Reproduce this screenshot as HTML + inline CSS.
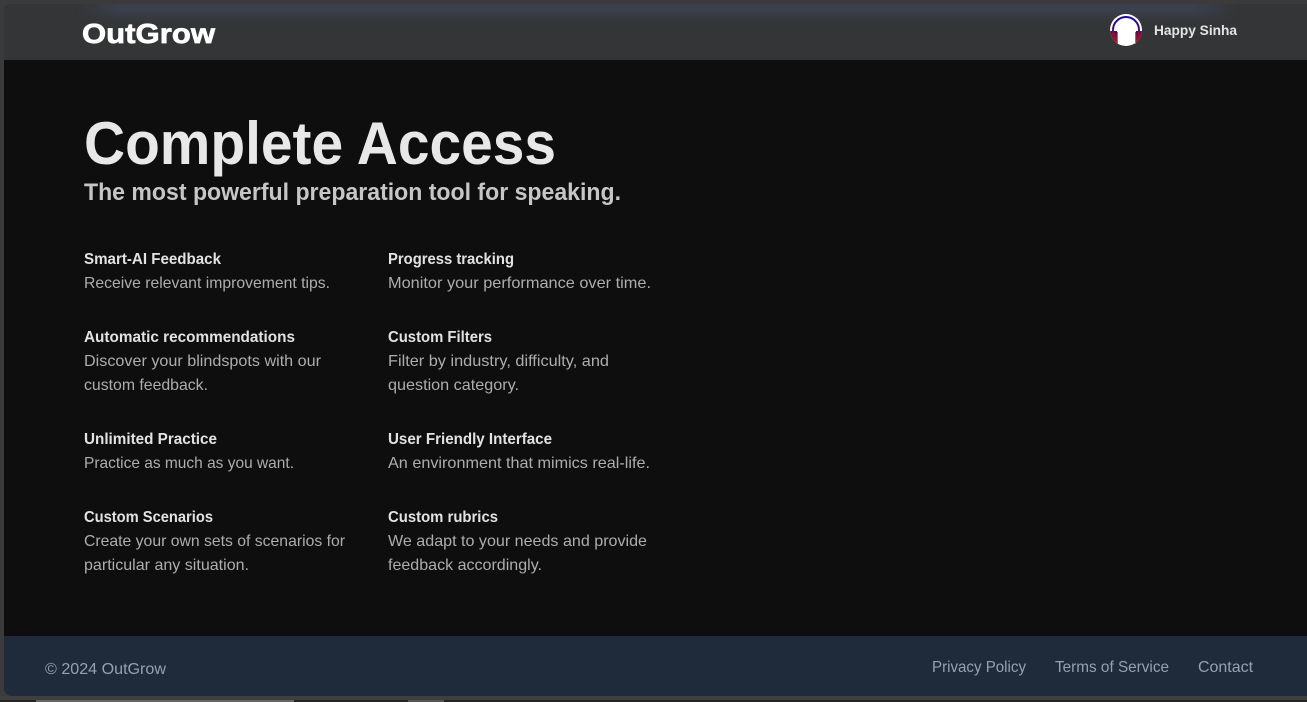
<!DOCTYPE html>
<html lang="en">
<head>
<meta charset="utf-8">
<title>OutGrow</title>
<style>
html,body{margin:0;padding:0;width:1307px;height:702px;overflow:hidden;background:#3b3b3b}
body{position:relative;font-family:"Liberation Sans",sans-serif}
div{position:absolute}
svg{position:absolute;left:0;top:0}
text{font-family:"Liberation Sans",sans-serif}
.t{font-size:16px;font-weight:700;fill:#e2e2e2}
.d{font-size:16px;fill:#adadad}
.f{font-size:16px;fill:#97a0ac}
</style>
</head>
<body>
<div style="left:4px;top:4px;width:1303px;height:56px;background:#343536;border-radius:6px 0 0 0"></div>
<div style="left:75px;top:4px;width:1165px;height:20px;background:linear-gradient(180deg,#3a404d 0%,#3a404d 30%,rgba(52,53,54,0) 100%);-webkit-mask-image:linear-gradient(90deg,transparent 0,#000 45px,#000 1120px,transparent 100%);mask-image:linear-gradient(90deg,transparent 0,#000 45px,#000 1120px,transparent 100%)"></div>
<div style="left:4px;top:60px;width:1303px;height:576px;background:#0e0e0f"></div>
<div style="left:4px;top:636px;width:1303px;height:60px;background:#1f2b3b;border-radius:0 0 0 8px"></div>
<div style="left:0;top:696px;width:1307px;height:4px;background:#3f3f3f"></div>
<div style="left:0;top:700px;width:1307px;height:2px;background:#232323"></div>
<div style="left:36px;top:700px;width:258px;height:2px;background:#666"></div>
<div style="left:408px;top:700px;width:36px;height:2px;background:#555"></div>

<svg width="1307" height="702" viewBox="0 0 1307 702">
  <defs>
    <clipPath id="c"><circle cx="1126" cy="30" r="16"/></clipPath>
    <linearGradient id="arc" gradientUnits="userSpaceOnUse" x1="0" y1="16" x2="0" y2="36">
      <stop offset="0" stop-color="#1f0a96"/>
      <stop offset=".6" stop-color="#3a0a7a"/>
      <stop offset="1" stop-color="#a0103a"/>
    </linearGradient>
    <linearGradient id="cup" gradientUnits="userSpaceOnUse" x1="0" y1="30" x2="0" y2="46">
      <stop offset="0" stop-color="#4a0a50"/>
      <stop offset=".4" stop-color="#8c0f2c"/>
      <stop offset=".8" stop-color="#a81530"/>
      <stop offset="1" stop-color="#ffffff"/>
    </linearGradient>
  </defs>
  <text x="82" y="43" font-size="28" font-weight="700" fill="#fff" stroke="#fff" stroke-width=".7" textLength="133" lengthAdjust="spacingAndGlyphs">OutGrow</text>

  <circle cx="1126" cy="30" r="16" fill="#fff"/>
  <g clip-path="url(#c)">
    <rect x="1110" y="31" width="7" height="13" fill="url(#cup)"/>
    <rect x="1136" y="31" width="6" height="13" fill="url(#cup)"/>
  </g>
  <path d="M1113 35V30a13 13 0 0 1 26 0v5" fill="none" stroke="url(#arc)" stroke-width="2"/>
  <rect x="1117" y="32" width="1" height="12" fill="#e0503f"/>
  <rect x="1135" y="32" width="1" height="12" fill="#e0503f"/>
  <text x="1154" y="35" font-size="14" font-weight="700" fill="#e4e4e4" textLength="83" lengthAdjust="spacingAndGlyphs">Happy Sinha</text>

  <text x="84" y="164" font-size="60" font-weight="700" fill="#e8e8e8" textLength="472" lengthAdjust="spacingAndGlyphs">Complete Access</text>
  <text x="84" y="200" font-size="24" font-weight="700" fill="#c6c6c6" textLength="537" lengthAdjust="spacingAndGlyphs">The most powerful preparation tool for speaking.</text>

  <text class="t" x="84" y="264" textLength="137" lengthAdjust="spacingAndGlyphs">Smart-AI Feedback</text>
  <text class="d" x="84" y="288" textLength="246" lengthAdjust="spacingAndGlyphs">Receive relevant improvement tips.</text>
  <text class="t" x="84" y="342" textLength="211" lengthAdjust="spacingAndGlyphs">Automatic recommendations</text>
  <text class="d" x="84" y="366" textLength="237" lengthAdjust="spacingAndGlyphs">Discover your blindspots with our</text>
  <text class="d" x="84" y="390" textLength="124" lengthAdjust="spacingAndGlyphs">custom feedback.</text>
  <text class="t" x="84" y="444" textLength="133" lengthAdjust="spacingAndGlyphs">Unlimited Practice</text>
  <text class="d" x="84" y="468" textLength="210" lengthAdjust="spacingAndGlyphs">Practice as much as you want.</text>
  <text class="t" x="84" y="522" textLength="129" lengthAdjust="spacingAndGlyphs">Custom Scenarios</text>
  <text class="d" x="84" y="546" textLength="261" lengthAdjust="spacingAndGlyphs">Create your own sets of scenarios for</text>
  <text class="d" x="84" y="570" textLength="165" lengthAdjust="spacingAndGlyphs">particular any situation.</text>

  <text class="t" x="388" y="264" textLength="126" lengthAdjust="spacingAndGlyphs">Progress tracking</text>
  <text class="d" x="388" y="288" textLength="263" lengthAdjust="spacingAndGlyphs">Monitor your performance over time.</text>
  <text class="t" x="388" y="342" textLength="104" lengthAdjust="spacingAndGlyphs">Custom Filters</text>
  <text class="d" x="388" y="366" textLength="221" lengthAdjust="spacingAndGlyphs">Filter by industry, difficulty, and</text>
  <text class="d" x="388" y="390" textLength="131" lengthAdjust="spacingAndGlyphs">question category.</text>
  <text class="t" x="388" y="444" textLength="164" lengthAdjust="spacingAndGlyphs">User Friendly Interface</text>
  <text class="d" x="388" y="468" textLength="262" lengthAdjust="spacingAndGlyphs">An environment that mimics real-life.</text>
  <text class="t" x="388" y="522" textLength="110" lengthAdjust="spacingAndGlyphs">Custom rubrics</text>
  <text class="d" x="388" y="546" textLength="259" lengthAdjust="spacingAndGlyphs">We adapt to your needs and provide</text>
  <text class="d" x="388" y="570" textLength="154" lengthAdjust="spacingAndGlyphs">feedback accordingly.</text>

  <text class="f" x="45" y="674" textLength="121" lengthAdjust="spacingAndGlyphs">© 2024 OutGrow</text>
  <text class="f" x="932" y="672" textLength="94" lengthAdjust="spacingAndGlyphs">Privacy Policy</text>
  <text class="f" x="1055" y="672" textLength="114" lengthAdjust="spacingAndGlyphs">Terms of Service</text>
  <text class="f" x="1198" y="672" textLength="55" lengthAdjust="spacingAndGlyphs">Contact</text>
</svg>
</body>
</html>
